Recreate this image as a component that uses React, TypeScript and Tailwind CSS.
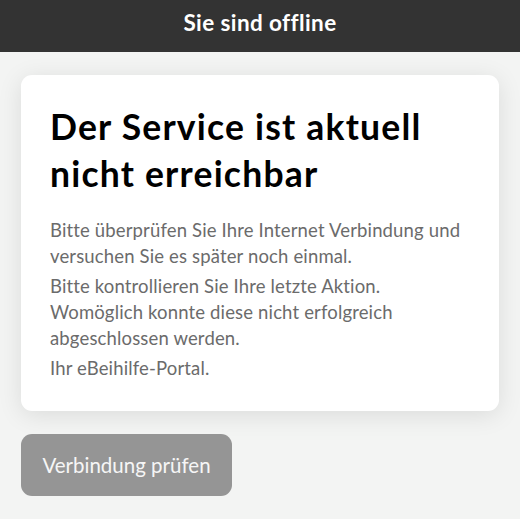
import React from 'react';

export default function App() {
  return (
    <div className="min-h-[519px] bg-[#f3f4f3] font-['Lato','Noto_Sans',sans-serif]">
      {/* Offline banner */}
      <div className="h-[52px] bg-[#333333] flex items-center justify-center pb-[7px]">
        <span className="text-white font-bold text-[22.5px] tracking-[0.4px]">Sie sind offline</span>
      </div>

      <div className="px-[21px] pt-[23px]">
        {/* Message card */}
        <div className="bg-white rounded-[11px] shadow-[0_4px_24px_rgba(0,0,0,0.10)] pl-[29px] pr-[24px] pt-[28px] pb-[30px]">
          <h1 className="text-black font-bold text-[35.5px] leading-[47px] tracking-[1.2px]">
            Der Service ist aktuell nicht erreichbar
          </h1>
          <div className="mt-[20px] text-[#6b6b6b] text-[18.5px] leading-[26px] tracking-[0.15px] space-y-[4px]">
            <p>Bitte überprüfen Sie Ihre Internet Verbindung und versuchen Sie es später noch einmal.</p>
            <p>Bitte kontrollieren Sie Ihre letzte Aktion. Womöglich konnte diese nicht erfolgreich abgeschlossen werden.</p>
            <p>Ihr eBeihilfe-Portal.</p>
          </div>
        </div>

        <button className="mt-[23px] h-[62px] w-[211px] rounded-[11px] bg-[#959595] text-[#f6f6f6] text-[20.5px]">
          Verbindung prüfen
        </button>
      </div>
    </div>
  );
}
